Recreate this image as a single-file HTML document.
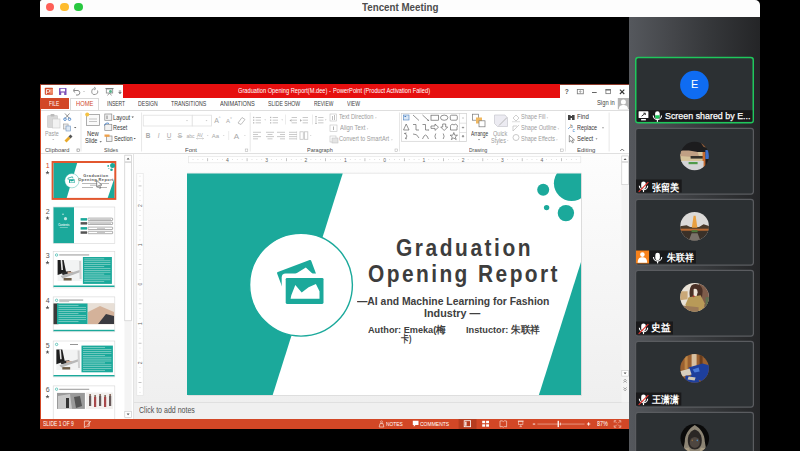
<!DOCTYPE html>
<html><head><meta charset="utf-8">
<style>
*{margin:0;padding:0;box-sizing:border-box}
html,body{width:800px;height:451px;overflow:hidden;background:#000;font-family:"Liberation Sans",sans-serif;position:relative}
.a{position:absolute}
.t{position:absolute;white-space:nowrap;line-height:1;transform-origin:0 0}
svg{position:absolute;overflow:visible}
</style></head><body>
<div class="a" style="left:40px;top:0px;width:720.00px;height:17.00px;background:#fdfdfd;border-radius:2px 5px 0 0"></div>
<div class="a" style="left:45.7px;top:2.8px;width:8.6px;height:8.6px;border-radius:50%;background:#fe5f57"></div>
<div class="a" style="left:60.10000000000001px;top:2.8px;width:8.6px;height:8.6px;border-radius:50%;background:#febc2e"></div>
<div class="a" style="left:74.3px;top:2.8px;width:8.6px;height:8.6px;border-radius:50%;background:#28c840"></div>
<div class="t" style="left:361.70px;top:2.68px;font-size:10.14px;color:#4d4d4d;font-weight:bold;transform:scaleX(0.965);">Tencent Meeting</div>
<div class="a" style="left:629px;top:17px;width:131.00px;height:434.00px;background:linear-gradient(90deg,#55585d 0%,#46484c 30%,#36383b 60%,#242527 100%)"></div>
<div class="a" style="left:40px;top:84px;width:589.00px;height:345.00px;background:#fff"></div>
<div class="a" style="left:40px;top:84px;width:1.00px;height:345.00px;background:#d24726"></div>
<div class="a" style="left:40px;top:84px;width:589.00px;height:0.90px;background:#8c3a2a"></div>
<div class="a" style="left:123px;top:84px;width:437.00px;height:14.00px;background:#e60f0f"></div>
<div class="t" style="left:237.72px;top:88.39px;font-size:6.96px;color:#fff;transform:scaleX(0.817);">Graduation Opening Report(M.dee) -</div>
<div class="t" style="left:332.54px;top:88.39px;font-size:6.96px;color:#fff;transform:scaleX(0.818);">PowerPoint (Product Activation Failed)</div>
<div class="a" style="left:40px;top:98.4px;width:28.50px;height:11.10px;background:#d24726"></div>
<div class="t" style="left:49.01px;top:100.76px;font-size:6.52px;color:#fff;transform:scaleX(0.753);">FILE</div>
<div class="a" style="left:70.4px;top:98.2px;width:29.10px;height:12.40px;background:#fff;border:1px solid #d9d9d9;border-bottom:none"></div>
<div class="t" style="left:76.14px;top:100.76px;font-size:6.52px;color:#d04a2a;transform:scaleX(0.888);">HOME</div>
<div class="t" style="left:106.55px;top:100.76px;font-size:6.52px;color:#3c3c3c;transform:scaleX(0.763);">INSERT</div>
<div class="t" style="left:138.49px;top:100.76px;font-size:6.52px;color:#3c3c3c;transform:scaleX(0.791);">DESIGN</div>
<div class="t" style="left:171.39px;top:100.76px;font-size:6.52px;color:#3c3c3c;transform:scaleX(0.805);">TRANSITIONS</div>
<div class="t" style="left:220.40px;top:100.76px;font-size:6.52px;color:#3c3c3c;transform:scaleX(0.868);">ANIMATIONS</div>
<div class="t" style="left:268.20px;top:100.76px;font-size:6.52px;color:#3c3c3c;transform:scaleX(0.786);">SLIDE SHOW</div>
<div class="t" style="left:313.61px;top:100.76px;font-size:6.52px;color:#3c3c3c;transform:scaleX(0.753);">REVIEW</div>
<div class="t" style="left:347.00px;top:100.76px;font-size:6.52px;color:#3c3c3c;transform:scaleX(0.778);">VIEW</div>
<div class="t" style="left:597.07px;top:100.03px;font-size:6.67px;color:#444;transform:scaleX(0.871);">Sign in</div>
<div class="a" style="left:41px;top:109.6px;width:588.00px;height:0.80px;background:#dedede"></div>
<div class="a" style="left:41px;top:153px;width:588.00px;height:1.00px;background:#e0e0e0"></div>
<div class="t" style="left:45.32px;top:130.94px;font-size:6.96px;color:#9c9c9c;transform:scaleX(0.774);">Paste</div>
<div class="t" style="left:87.13px;top:130.94px;font-size:6.96px;color:#3a3a3a;transform:scaleX(0.842);">New</div>
<div class="t" style="left:84.88px;top:138.09px;font-size:6.96px;color:#3a3a3a;transform:scaleX(0.797);">Slide</div>
<div class="t" style="left:113.29px;top:115.09px;font-size:6.96px;color:#3a3a3a;transform:scaleX(0.823);">Layout</div>
<div class="t" style="left:113.32px;top:125.09px;font-size:6.96px;color:#3a3a3a;transform:scaleX(0.780);">Reset</div>
<div class="t" style="left:113.68px;top:135.94px;font-size:6.96px;color:#3a3a3a;transform:scaleX(0.803);">Section</div>
<div class="t" style="left:44.81px;top:146.70px;font-size:6.23px;color:#4a4a4a;transform:scaleX(0.915);">Clipboard</div>
<div class="t" style="left:104.29px;top:146.70px;font-size:6.23px;color:#4a4a4a;transform:scaleX(0.831);">Slides</div>
<div class="t" style="left:185.02px;top:146.70px;font-size:6.23px;color:#4a4a4a;transform:scaleX(0.960);">Font</div>
<div class="t" style="left:307.06px;top:146.70px;font-size:6.23px;color:#4a4a4a;transform:scaleX(0.885);">Paragraph</div>
<div class="t" style="left:469.10px;top:146.70px;font-size:6.23px;color:#4a4a4a;transform:scaleX(0.795);">Drawing</div>
<div class="t" style="left:577.02px;top:146.70px;font-size:6.23px;color:#4a4a4a;transform:scaleX(0.961);">Editing</div>
<div class="t" style="left:339.49px;top:114.49px;font-size:6.96px;color:#9c9c9c;transform:scaleX(0.815);">Text Direction</div>
<div class="t" style="left:339.60px;top:125.49px;font-size:6.96px;color:#9c9c9c;transform:scaleX(0.842);">Align Text</div>
<div class="t" style="left:339.32px;top:136.49px;font-size:6.96px;color:#9c9c9c;transform:scaleX(0.816);">Convert to SmartArt</div>
<div class="t" style="left:470.50px;top:130.94px;font-size:6.96px;color:#3a3a3a;transform:scaleX(0.694);">Arrange</div>
<div class="t" style="left:493.28px;top:130.94px;font-size:6.96px;color:#9c9c9c;transform:scaleX(0.797);">Quick</div>
<div class="t" style="left:491.28px;top:138.09px;font-size:6.96px;color:#9c9c9c;transform:scaleX(0.786);">Styles</div>
<div class="t" style="left:520.78px;top:114.49px;font-size:6.96px;color:#9c9c9c;transform:scaleX(0.794);">Shape Fill</div>
<div class="t" style="left:520.78px;top:125.49px;font-size:6.96px;color:#9c9c9c;transform:scaleX(0.803);">Shape Outline</div>
<div class="t" style="left:520.78px;top:136.49px;font-size:6.96px;color:#9c9c9c;transform:scaleX(0.785);">Shape Effects</div>
<div class="t" style="left:576.51px;top:114.49px;font-size:6.96px;color:#3a3a3a;transform:scaleX(0.874);">Find</div>
<div class="t" style="left:576.56px;top:125.49px;font-size:6.96px;color:#3a3a3a;transform:scaleX(0.785);">Replace</div>
<div class="t" style="left:576.77px;top:136.49px;font-size:6.96px;color:#3a3a3a;transform:scaleX(0.839);">Select</div>
<svg style="left:0;top:0" width="800" height="451" viewBox="0 0 800 451">
<rect x="44.8" y="87.8" width="8.2" height="7" rx="0.8" fill="#d24726"/><rect x="49.5" y="88.8" width="3.5" height="5" fill="#f08b6a"/><path d="M46.4,94 V89.6 H48.6 A1.3,1.3 0 0 1 48.6,92.2 H46.4" stroke="#fff" stroke-width="0.9" fill="none"/>
<rect x="59" y="88" width="7.5" height="7" rx="0.6" fill="#7d52b8"/><rect x="60.5" y="88.8" width="4.5" height="2.6" fill="#fff"/><rect x="61.2" y="92.6" width="3" height="2.4" fill="#fff"/>
<path d="M74,90.5 H78 A2.3,2.3 0 0 1 78,95 H76" stroke="#8a8a8a" stroke-width="1" fill="none"/><path d="M73,90.5 L75.2,88.4 M73,90.5 L75.2,92.6" stroke="#8a8a8a" stroke-width="1"/>
<circle cx="84" cy="91.5" r="0.5" fill="#999"/>
<path d="M97.5,90.5 A3,3 0 1 1 94.5,88.5" stroke="#999" stroke-width="1" fill="none"/><path d="M94,87 L96,88.6 L94,90" stroke="#999" stroke-width="0.9" fill="none"/>
<rect x="105.5" y="88" width="8" height="1" fill="#777"/><rect x="106.3" y="89" width="6.4" height="4" fill="none" stroke="#888" stroke-width="0.8"/><path d="M109.5,93 L107.5,95.5 M109.5,93 L111.5,95.5" stroke="#888" stroke-width="0.8"/><circle cx="110.5" cy="91.5" r="1.4" fill="#54b38a"/>
<path d="M118.8,91 H121.2 M118.8,92.4 L120,93.8 L121.2,92.4Z" stroke="#666" stroke-width="0.7" fill="#666"/>
<text x="566.7" y="94" font-family="Liberation Sans" font-weight="bold" font-size="6.6" fill="#555" text-anchor="middle">?</text>
<rect x="577.3" y="89.5" width="6" height="4.3" fill="none" stroke="#777" stroke-width="0.8"/><path d="M580.3,93.4 V90.8 M579.2,91.8 L580.3,90.6 L581.4,91.8" stroke="#777" stroke-width="0.6" fill="none"/>
<rect x="592" y="92" width="4.7" height="0.9" fill="#555"/>
<rect x="605.9" y="89.6" width="4.6" height="4.1" fill="none" stroke="#666" stroke-width="0.7"/><rect x="605.6" y="89.3" width="5.2" height="1.2" fill="#666"/>
<path d="M619.9,89.6 L624.3,94 M624.3,89.6 L619.9,94" stroke="#333" stroke-width="1.1"/>
<rect x="617.8" y="98" width="11.2" height="11.3" fill="#b4b4b4"/><circle cx="623.4" cy="101.9" r="2.5" fill="#fff"/><path d="M618.8,109.3 C619,105.6 621.2,105 623.4,105 C625.6,105 627.8,105.6 628,109.3Z" fill="#fff"/>
<rect x="47.5" y="115.5" width="10" height="12" rx="0.6" fill="#d8d8d8" stroke="#c4c4c4" stroke-width="0.6"/><rect x="50.5" y="114" width="4" height="2.6" rx="0.8" fill="#bbb"/><rect x="52.5" y="119" width="7.5" height="9" fill="#f2f2f2" stroke="#c8c8c8" stroke-width="0.6"/>
<path d="M52.5,139.5 h1.6" stroke="#aaa" stroke-width="0.7"/>
<path d="M65,113.5 L69.5,118.5 M69.5,113.5 L65,118.5" stroke="#777" stroke-width="0.8"/><circle cx="65" cy="119.2" r="1.3" fill="none" stroke="#3b78c2" stroke-width="0.8"/><circle cx="69.5" cy="119.2" r="1.3" fill="none" stroke="#3b78c2" stroke-width="0.8"/>
<rect x="63.5" y="124" width="4.6" height="5" fill="#e9e9e9" stroke="#9a9a9a" stroke-width="0.6"/><rect x="66" y="126" width="4.6" height="5" fill="#dde8f4" stroke="#6f93c0" stroke-width="0.6"/><path d="M74,127 h2.4 l-1.2,1.3z" fill="#555"/>
<path d="M64.5,140.5 L68.5,136.5 L70.5,138.5 L66.5,142.5Z" fill="#e8a92a"/><path d="M68.5,136.5 L70.5,134.5 L72.5,136.5 L70.5,138.5Z" fill="#555"/>
<rect x="77" y="149" width="2.6" height="2.6" fill="none" stroke="#999" stroke-width="0.5"/>
<rect x="86.5" y="114.5" width="13" height="11" fill="#fafafa" stroke="#9a9a9a" stroke-width="0.8"/><rect x="89" y="118.5" width="8" height="1" fill="#c4c4c4"/><rect x="89" y="121" width="8" height="1" fill="#c4c4c4"/><circle cx="87.2" cy="114.5" r="2" fill="#f5c242"/>
<path d="M99.5,141.2 h2.4 l-1.2,1.3z" fill="#555"/>
<rect x="104.8" y="114" width="7" height="6.3" fill="#f2f2f2" stroke="#8a8a8a" stroke-width="0.7"/><rect x="106" y="115.5" width="2" height="3.5" fill="#bbb"/>
<path d="M131.5,116.6 h2.4 l-1.2,1.3z" fill="#555"/>
<rect x="104.8" y="124.3" width="7" height="6.3" fill="#f2f2f2" stroke="#8a8a8a" stroke-width="0.7"/><path d="M104.5,125.5 A3,3 0 0 1 109,123.5" stroke="#3b78c2" stroke-width="0.9" fill="none"/>
<rect x="106.5" y="136" width="5.5" height="5.5" fill="#f2f2f2" stroke="#8a8a8a" stroke-width="0.7"/><rect x="104.5" y="134.5" width="5" height="2.3" fill="#f0a048"/>
<path d="M133.5,138.0 h2.4 l-1.2,1.3z" fill="#555"/>
<rect x="80.6" y="112.5" width="0.8" height="39" fill="#e2e2e2"/>
<rect x="141.25" y="112.5" width="0.8" height="39" fill="#e2e2e2"/>
<rect x="249.75" y="112.5" width="0.8" height="39" fill="#e2e2e2"/>
<rect x="399" y="112.5" width="0.8" height="39" fill="#e2e2e2"/>
<rect x="565" y="112.5" width="0.8" height="39" fill="#e2e2e2"/>
<rect x="608.7" y="112.5" width="0.8" height="39" fill="#e2e2e2"/>
<rect x="77" y="149" width="2.6" height="2.6" fill="none" stroke="#aaa" stroke-width="0.5"/>
<rect x="245.2" y="149" width="2.6" height="2.6" fill="none" stroke="#aaa" stroke-width="0.5"/>
<rect x="395" y="149" width="2.6" height="2.6" fill="none" stroke="#aaa" stroke-width="0.5"/>
<rect x="560.6" y="149" width="2.6" height="2.6" fill="none" stroke="#aaa" stroke-width="0.5"/>
<rect x="143.25" y="115.2" width="49" height="10.8" fill="#fff" stroke="#e0e0e0" stroke-width="0.8"/><rect x="192.25" y="115.2" width="19.2" height="10.8" fill="#fff" stroke="#e0e0e0" stroke-width="0.8"/>
<path d="M186,120.3 h2 l-1,1z M205.5,120.3 h2 l-1,1z" fill="#bbb"/>
<text x="216.5" y="123.4" font-family="Liberation Sans" font-size="7" fill="#a8a8a8" font-weight="normal" text-anchor="middle" >A</text>
<text x="219.6" y="118.6" font-family="Liberation Sans" font-size="3.5" fill="#a8a8a8" font-weight="normal" text-anchor="middle" >^</text>
<text x="228" y="123.4" font-family="Liberation Sans" font-size="6" fill="#a8a8a8" font-weight="normal" text-anchor="middle" >A</text>
<text x="231" y="118.6" font-family="Liberation Sans" font-size="3" fill="#a8a8a8" font-weight="normal" text-anchor="middle" >v</text>
<path d="M238,123 L242,117.5 L245,119.5 L241,124.5Z" fill="none" stroke="#b0b0b0" stroke-width="0.8"/>
<text x="148" y="138" font-family="Liberation Sans" font-size="6.4" fill="#a8a8a8" font-weight="bold" text-anchor="middle" >B</text>
<text x="158.6" y="138" font-family="Liberation Sans" font-size="6.4" fill="#a8a8a8" font-weight="normal" text-anchor="middle" font-style="italic">I</text>
<text x="169" y="138" font-family="Liberation Sans" font-size="6.4" fill="#a8a8a8" font-weight="normal" text-anchor="middle" >U</text>
<rect x="166.8" y="139" width="4.4" height="0.6" fill="#b0b0b0"/>
<text x="180" y="138" font-family="Liberation Sans" font-size="6.4" fill="#a8a8a8" font-weight="normal" text-anchor="middle" >S</text>
<rect x="177.5" y="136" width="5" height="0.6" fill="#b0b0b0"/>
<text x="190.5" y="138" font-family="Liberation Sans" font-size="5" fill="#a8a8a8" font-weight="normal" text-anchor="middle" >abc</text>
<text x="200" y="136.5" font-family="Liberation Sans" font-size="4.6" fill="#a8a8a8" font-weight="normal" text-anchor="middle" >AV</text>
<path d="M196.5,138.5 h7 M197.5,137.7 l-1,0.8 l1,0.8 M202.5,137.7 l1,0.8 l-1,0.8" stroke="#b0b0b0" stroke-width="0.5" fill="none"/>
<text x="215.5" y="138" font-family="Liberation Sans" font-size="6" fill="#a8a8a8" font-weight="normal" text-anchor="middle" >Aa</text>
<text x="236.5" y="138.5" font-family="Liberation Sans" font-size="8" fill="#a8a8a8" font-weight="normal" text-anchor="middle" >A</text>
<path d="M206.8,135.2 h1.8 l-0.9,0.9z" fill="#bbb"/>
<path d="M222.8,135.2 h1.8 l-0.9,0.9z" fill="#bbb"/>
<path d="M244,135.2 h1.8 l-0.9,0.9z" fill="#bbb"/>
<rect x="228.5" y="131" width="0.6" height="9" fill="#e0e0e0"/>
<rect x="253" y="116.8" width="1.3" height="1.3" fill="#b8b8b8"/><rect x="255.6" y="117.0" width="5.4" height="0.9" fill="#c4c4c4"/><rect x="253" y="119.5" width="1.3" height="1.3" fill="#b8b8b8"/><rect x="255.6" y="119.7" width="5.4" height="0.9" fill="#c4c4c4"/><rect x="253" y="122.2" width="1.3" height="1.3" fill="#b8b8b8"/><rect x="255.6" y="122.4" width="5.4" height="0.9" fill="#c4c4c4"/>
<rect x="270" y="116.8" width="1.3" height="1.3" fill="#b8b8b8"/><rect x="272.6" y="117.0" width="5.4" height="0.9" fill="#c4c4c4"/><rect x="270" y="119.5" width="1.3" height="1.3" fill="#b8b8b8"/><rect x="272.6" y="119.7" width="5.4" height="0.9" fill="#c4c4c4"/><rect x="270" y="122.2" width="1.3" height="1.3" fill="#b8b8b8"/><rect x="272.6" y="122.4" width="5.4" height="0.9" fill="#c4c4c4"/>
<path d="M264.3,119.6 h1.8 l-0.9,0.9z M281.3,119.6 h1.8 l-0.9,0.9z M324.8,119.6 h1.8 l-0.9,0.9z M309.8,135.2 h1.8 l-0.9,0.9z" fill="#bbb"/>
<rect x="285" y="114.5" width="0.6" height="10" fill="#e0e0e0"/><rect x="312" y="114.5" width="0.6" height="10" fill="#e0e0e0"/><rect x="296.5" y="131" width="0.6" height="9" fill="#e0e0e0"/>
<rect x="291.6" y="117.0" width="5.4" height="0.9" fill="#c4c4c4"/><rect x="291.6" y="119.7" width="5.4" height="0.9" fill="#c4c4c4"/><rect x="291.6" y="122.4" width="5.4" height="0.9" fill="#c4c4c4"/>
<rect x="302.6" y="117.0" width="5.4" height="0.9" fill="#c4c4c4"/><rect x="302.6" y="119.7" width="5.4" height="0.9" fill="#c4c4c4"/><rect x="302.6" y="122.4" width="5.4" height="0.9" fill="#c4c4c4"/>
<path d="M289.5,120.4 l2,-1.4 v2.8z M300,119 l2,1.4 l-2,1.4z" fill="#b0b0b0"/>
<rect x="318.1" y="117.0" width="5.4" height="0.9" fill="#c4c4c4"/><rect x="318.1" y="119.7" width="5.4" height="0.9" fill="#c4c4c4"/><rect x="318.1" y="122.4" width="5.4" height="0.9" fill="#c4c4c4"/>
<path d="M316,116 v8 M315,117 l1,-1 l1,1 M315,123 l1,1 l1,-1" stroke="#b0b0b0" stroke-width="0.6" fill="none"/>
<rect x="253" y="131.8" width="8" height="0.9" fill="#c4c4c4"/>
<rect x="253" y="134.0" width="5" height="0.9" fill="#c4c4c4"/>
<rect x="253" y="136.20000000000002" width="8" height="0.9" fill="#c4c4c4"/>
<rect x="253" y="138.4" width="5" height="0.9" fill="#c4c4c4"/>
<rect x="266" y="131.8" width="8" height="0.9" fill="#c4c4c4"/>
<rect x="267.5" y="134.0" width="5" height="0.9" fill="#c4c4c4"/>
<rect x="266" y="136.20000000000002" width="8" height="0.9" fill="#c4c4c4"/>
<rect x="267.5" y="138.4" width="5" height="0.9" fill="#c4c4c4"/>
<rect x="277" y="131.8" width="8" height="0.9" fill="#c4c4c4"/>
<rect x="280" y="134.0" width="5" height="0.9" fill="#c4c4c4"/>
<rect x="277" y="136.20000000000002" width="8" height="0.9" fill="#c4c4c4"/>
<rect x="280" y="138.4" width="5" height="0.9" fill="#c4c4c4"/>
<rect x="289" y="131.8" width="8" height="0.9" fill="#c4c4c4"/>
<rect x="289" y="134.0" width="8" height="0.9" fill="#c4c4c4"/>
<rect x="289" y="136.20000000000002" width="8" height="0.9" fill="#c4c4c4"/>
<rect x="289" y="138.4" width="8" height="0.9" fill="#c4c4c4"/>
<rect x="300" y="131.8" width="3.3" height="7.5" fill="none" stroke="#c4c4c4" stroke-width="0.8"/><rect x="304.5" y="131.8" width="3.3" height="7.5" fill="none" stroke="#c4c4c4" stroke-width="0.8"/>
<rect x="330" y="114" width="6.5" height="7" fill="none" stroke="#c0c0c0" stroke-width="0.6"/><rect x="332" y="116" width="0.8" height="4" fill="#b0b0b0"/><rect x="334" y="115" width="0.8" height="5" fill="#b0b0b0"/>
<rect x="330" y="125" width="7" height="6.5" fill="none" stroke="#c0c0c0" stroke-width="0.6"/><rect x="333" y="126.5" width="1" height="3.5" fill="#b0b0b0"/>
<rect x="330" y="136" width="6" height="6" fill="none" stroke="#c0c0c0" stroke-width="0.6"/><rect x="332" y="138" width="6" height="5" fill="#e4e4e4" stroke="#bbb" stroke-width="0.5"/>
<path d="M375,117.6 h1.8 l-0.9,0.9z M366.6,128.6 h1.8 l-0.9,0.9z M391,139.6 h1.8 l-0.9,0.9z" fill="#bbb"/>
<rect x="401.5" y="113.5" width="65" height="27.8" fill="#fff" stroke="#d0d0d0" stroke-width="0.7"/><rect x="459.5" y="113.5" width="7" height="27.8" fill="#fff" stroke="#d0d0d0" stroke-width="0.6"/>
<rect x="459.5" y="122.8" width="7" height="0.6" fill="#d0d0d0"/><rect x="459.5" y="132.1" width="7" height="0.6" fill="#d0d0d0"/>
<path d="M462.2,118 h1.6 M462,127.3 h2 l-1,1z M462,136.3 h2 l-1,1z M462,135.5 h2" stroke="#777" stroke-width="0.5" fill="#777"/>
<rect x="403.5" y="115" width="5.5" height="5" fill="#dbe8f6" stroke="#4a7fc0" stroke-width="0.6"/><rect x="404.5" y="116" width="1.6" height="1" fill="#4a7fc0"/>
<path d="M413,115 L419,120.5" stroke="#666" stroke-width="0.7" fill="none"/>
<path d="M422.5,115 L428.5,120.5" stroke="#666" stroke-width="0.7" fill="none"/><path d="M428,119.3 l1.2,1.8 l-1.8,-0.3z" fill="#666"/>
<rect x="431" y="115.2" width="7.5" height="5" stroke="#666" stroke-width="0.7" fill="none"/>
<ellipse cx="444.2" cy="117.7" rx="3.7" ry="2.6" stroke="#666" stroke-width="0.7" fill="none"/>
<rect x="450.3" y="115.2" width="7" height="5" rx="1.2" stroke="#666" stroke-width="0.7" fill="none"/>
<path d="M406.2,124 L403.5,130 H409Z" stroke="#666" stroke-width="0.7" fill="none"/>
<path d="M413,124.5 H416 V130 H419" stroke="#666" stroke-width="0.7" fill="none"/>
<path d="M422.5,124.5 H425.5 V130 H428" stroke="#666" stroke-width="0.7" fill="none"/><path d="M428,129.2 l1.3,0.8 l-1.3,0.8z" fill="#666"/>
<path d="M431,126 H435 V124 L438.5,127.2 L435,130.4 V128.4 H431Z" stroke="#666" stroke-width="0.7" fill="none"/>
<path d="M442.7,124 H445.7 V127 H447.7 L444.2,130.5 L440.7,127 H442.7Z" stroke="#666" stroke-width="0.7" fill="none"/>
<path d="M450.5,130 V126.5 A2,2 0 0 1 454,125 A1.8,1.8 0 0 1 457,127.5 V130Z" stroke="#666" stroke-width="0.7" fill="none"/>
<path d="M404,133.5 l2.5,-0.5 M405,133 L407,136 L405.5,138.5 M406.2,137.5 l-0.6,1.2 l1.3,0.1" stroke="#666" stroke-width="0.7" fill="none"/>
<path d="M413,134 Q417,133.5 419,138" stroke="#666" stroke-width="0.7" fill="none"/>
<path d="M422.5,139 Q425.5,131 428.5,139" stroke="#666" stroke-width="0.7" fill="none"/>
<path d="M435.8,133.5 Q434,136.2 435.8,139" stroke="#666" stroke-width="0.7" fill="none"/>
<path d="M443.2,133.5 Q445,136.2 443.2,139" stroke="#666" stroke-width="0.7" fill="none"/>
<path d="M453.8,132.5 L454.8,135.2 L457.5,135.2 L455.3,136.9 L456.2,139.6 L453.8,138 L451.4,139.6 L452.3,136.9 L450.1,135.2 L452.8,135.2Z" stroke="#666" stroke-width="0.7" fill="none"/>
<rect x="472.5" y="114.2" width="6" height="6" fill="#fff" stroke="#777" stroke-width="0.7"/><rect x="476" y="117.5" width="6" height="6" fill="#f0b860"/><rect x="479" y="120.8" width="6" height="6" fill="#fff" stroke="#777" stroke-width="0.7"/>
<path d="M478,139.3 h2 l-1,1z" fill="#555"/>
<path d="M494.5,115 H505 L507.5,118 V126.5 H497.5 L494.5,123.5Z" fill="#ecebf2" stroke="#c7c7cf" stroke-width="0.7"/><path d="M499,125.5 L507,117.5" stroke="#b8b8b8" stroke-width="1"/>
<path d="M506.8,140.2 h1.8 l-0.9,0.9z" fill="#bbb"/>
<path d="M513,118 L516,115 L519,118 L516,121Z" fill="none" stroke="#bbb" stroke-width="0.7"/><rect x="512" y="121" width="8" height="1.3" fill="#e5e5e5"/>
<path d="M513,131 L519,125 M513,131 V126 H517" fill="none" stroke="#bbb" stroke-width="0.7"/>
<circle cx="516" cy="137.5" r="3" fill="none" stroke="#bbb" stroke-width="0.8"/>
<path d="M546.5,117.6 h1.8 l-0.9,0.9z M557.5,128.6 h1.8 l-0.9,0.9z M556,139.6 h1.8 l-0.9,0.9z" fill="#bbb"/>
<rect x="568" y="115" width="2.6" height="5" fill="#444"/><rect x="572" y="115" width="2.6" height="5" fill="#444"/><rect x="569.5" y="116" width="4" height="2" fill="#444"/>
<text x="571.5" y="128" font-family="Liberation Sans" font-size="4.5" fill="#555" text-anchor="middle">b</text><text x="573.5" y="131.5" font-family="Liberation Sans" font-size="4.5" fill="#3b78c2" text-anchor="middle">c</text><path d="M568,129 l2,-2" stroke="#3b78c2" stroke-width="0.6"/>
<path d="M602,127.4 h2 l-1,1z M595.5,138.6 h2 l-1,1z" fill="#555"/>
<path d="M569.3,135.5 V142 L571,140.5 L572.5,143 L573.5,142.4 L572.2,140 L574.5,140Z" fill="#fff" stroke="#555" stroke-width="0.6"/>
<path d="M620.2,151 L622.2,149 L624.2,151" stroke="#555" stroke-width="0.8" fill="none"/>
</svg>
<div class="a" style="left:41px;top:154px;width:93.00px;height:265.00px;background:#fff"></div>
<div class="a" style="left:134px;top:154px;width:495.00px;height:249.00px;background:linear-gradient(180deg,#fdfdfd 0%,#f6f6f6 50%,#efefef 100%)"></div>
<div class="a" style="left:134px;top:402.4px;width:495.00px;height:16.60px;background:#f0f0f0;border-top:1px solid #e0e0e0"></div>
<svg style="left:0;top:0" width="800" height="451" viewBox="0 0 800 451">
<rect x="124.5" y="154.5" width="7.2" height="264" fill="#f4f4f4"/>
<rect x="124.8" y="155.2" width="6.6" height="6.6" fill="#fff" stroke="#c6c6c6" stroke-width="0.6"/><path d="M126.6,159.6 L128.1,157.8 L129.6,159.6Z" fill="#555"/>
<rect x="124.8" y="162.3" width="6.6" height="158.5" fill="#fff" stroke="#c6c6c6" stroke-width="0.6"/>
<rect x="124.8" y="411.3" width="6.6" height="6.2" fill="#fff" stroke="#c6c6c6" stroke-width="0.6"/><path d="M126.6,413.5 L128.1,415.3 L129.6,413.5Z" fill="#555"/>
<rect x="133.2" y="154" width="0.8" height="265" fill="#dcdcdc"/>
<rect x="621.5" y="154.5" width="7.5" height="248" fill="#f4f4f4"/>
<rect x="621.8" y="156" width="6.6" height="5.8" fill="#fff" stroke="#c6c6c6" stroke-width="0.6"/><path d="M623.6,160 L625.1,158.2 L626.6,160Z" fill="#555"/>
<rect x="621.8" y="162.2" width="6.6" height="22.5" fill="#fff" stroke="#c6c6c6" stroke-width="0.6"/>
<rect x="621.8" y="370.5" width="6.6" height="5.6" fill="#fff" stroke="#c6c6c6" stroke-width="0.6"/><path d="M623.6,372.4 L625.1,374.2 L626.6,372.4Z" fill="#555"/>
<path d="M623.6,380.8 L625.1,379.2 L626.6,380.8 M623.6,382.6 L625.1,381 L626.6,382.6" stroke="#666" stroke-width="0.6" fill="none"/>
<path d="M623.6,387.4 L625.1,389 L626.6,387.4 M623.6,389.2 L625.1,390.8 L626.6,389.2" stroke="#666" stroke-width="0.6" fill="none"/>
<rect x="188.3" y="156.6" width="392.5" height="6.2" fill="#fff" stroke="#e2e2e2" stroke-width="0.6"/>
<rect x="192.71" y="159.4" width="0.6" height="0.6" fill="#a8a8a8"/>
<rect x="197.63" y="159.4" width="0.6" height="0.6" fill="#a8a8a8"/>
<rect x="202.54" y="159.4" width="0.6" height="0.6" fill="#a8a8a8"/>
<rect x="207.45" y="158.2" width="0.6" height="3" fill="#9a9a9a"/>
<rect x="212.36" y="159.4" width="0.6" height="0.6" fill="#a8a8a8"/>
<rect x="217.28" y="159.4" width="0.6" height="0.6" fill="#a8a8a8"/>
<rect x="222.19" y="159.4" width="0.6" height="0.6" fill="#a8a8a8"/>
<rect x="232.01" y="159.4" width="0.6" height="0.6" fill="#a8a8a8"/>
<rect x="236.93" y="159.4" width="0.6" height="0.6" fill="#a8a8a8"/>
<rect x="241.84" y="159.4" width="0.6" height="0.6" fill="#a8a8a8"/>
<rect x="246.75" y="158.2" width="0.6" height="3" fill="#9a9a9a"/>
<rect x="251.66" y="159.4" width="0.6" height="0.6" fill="#a8a8a8"/>
<rect x="256.57" y="159.4" width="0.6" height="0.6" fill="#a8a8a8"/>
<rect x="261.49" y="159.4" width="0.6" height="0.6" fill="#a8a8a8"/>
<rect x="271.31" y="159.4" width="0.6" height="0.6" fill="#a8a8a8"/>
<rect x="276.23" y="159.4" width="0.6" height="0.6" fill="#a8a8a8"/>
<rect x="281.14" y="159.4" width="0.6" height="0.6" fill="#a8a8a8"/>
<rect x="286.05" y="158.2" width="0.6" height="3" fill="#9a9a9a"/>
<rect x="290.96" y="159.4" width="0.6" height="0.6" fill="#a8a8a8"/>
<rect x="295.88" y="159.4" width="0.6" height="0.6" fill="#a8a8a8"/>
<rect x="300.79" y="159.4" width="0.6" height="0.6" fill="#a8a8a8"/>
<rect x="310.61" y="159.4" width="0.6" height="0.6" fill="#a8a8a8"/>
<rect x="315.53" y="159.4" width="0.6" height="0.6" fill="#a8a8a8"/>
<rect x="320.44" y="159.4" width="0.6" height="0.6" fill="#a8a8a8"/>
<rect x="325.35" y="158.2" width="0.6" height="3" fill="#9a9a9a"/>
<rect x="330.26" y="159.4" width="0.6" height="0.6" fill="#a8a8a8"/>
<rect x="335.18" y="159.4" width="0.6" height="0.6" fill="#a8a8a8"/>
<rect x="340.09" y="159.4" width="0.6" height="0.6" fill="#a8a8a8"/>
<rect x="349.91" y="159.4" width="0.6" height="0.6" fill="#a8a8a8"/>
<rect x="354.82" y="159.4" width="0.6" height="0.6" fill="#a8a8a8"/>
<rect x="359.74" y="159.4" width="0.6" height="0.6" fill="#a8a8a8"/>
<rect x="364.65" y="158.2" width="0.6" height="3" fill="#9a9a9a"/>
<rect x="369.56" y="159.4" width="0.6" height="0.6" fill="#a8a8a8"/>
<rect x="374.48" y="159.4" width="0.6" height="0.6" fill="#a8a8a8"/>
<rect x="379.39" y="159.4" width="0.6" height="0.6" fill="#a8a8a8"/>
<rect x="389.21" y="159.4" width="0.6" height="0.6" fill="#a8a8a8"/>
<rect x="394.12" y="159.4" width="0.6" height="0.6" fill="#a8a8a8"/>
<rect x="399.04" y="159.4" width="0.6" height="0.6" fill="#a8a8a8"/>
<rect x="403.95" y="158.2" width="0.6" height="3" fill="#9a9a9a"/>
<rect x="408.86" y="159.4" width="0.6" height="0.6" fill="#a8a8a8"/>
<rect x="413.78" y="159.4" width="0.6" height="0.6" fill="#a8a8a8"/>
<rect x="418.69" y="159.4" width="0.6" height="0.6" fill="#a8a8a8"/>
<rect x="428.51" y="159.4" width="0.6" height="0.6" fill="#a8a8a8"/>
<rect x="433.43" y="159.4" width="0.6" height="0.6" fill="#a8a8a8"/>
<rect x="438.34" y="159.4" width="0.6" height="0.6" fill="#a8a8a8"/>
<rect x="443.25" y="158.2" width="0.6" height="3" fill="#9a9a9a"/>
<rect x="448.16" y="159.4" width="0.6" height="0.6" fill="#a8a8a8"/>
<rect x="453.07" y="159.4" width="0.6" height="0.6" fill="#a8a8a8"/>
<rect x="457.99" y="159.4" width="0.6" height="0.6" fill="#a8a8a8"/>
<rect x="467.81" y="159.4" width="0.6" height="0.6" fill="#a8a8a8"/>
<rect x="472.73" y="159.4" width="0.6" height="0.6" fill="#a8a8a8"/>
<rect x="477.64" y="159.4" width="0.6" height="0.6" fill="#a8a8a8"/>
<rect x="482.55" y="158.2" width="0.6" height="3" fill="#9a9a9a"/>
<rect x="487.46" y="159.4" width="0.6" height="0.6" fill="#a8a8a8"/>
<rect x="492.38" y="159.4" width="0.6" height="0.6" fill="#a8a8a8"/>
<rect x="497.29" y="159.4" width="0.6" height="0.6" fill="#a8a8a8"/>
<rect x="507.11" y="159.4" width="0.6" height="0.6" fill="#a8a8a8"/>
<rect x="512.03" y="159.4" width="0.6" height="0.6" fill="#a8a8a8"/>
<rect x="516.94" y="159.4" width="0.6" height="0.6" fill="#a8a8a8"/>
<rect x="521.85" y="158.2" width="0.6" height="3" fill="#9a9a9a"/>
<rect x="526.76" y="159.4" width="0.6" height="0.6" fill="#a8a8a8"/>
<rect x="531.68" y="159.4" width="0.6" height="0.6" fill="#a8a8a8"/>
<rect x="536.59" y="159.4" width="0.6" height="0.6" fill="#a8a8a8"/>
<rect x="546.41" y="159.4" width="0.6" height="0.6" fill="#a8a8a8"/>
<rect x="551.33" y="159.4" width="0.6" height="0.6" fill="#a8a8a8"/>
<rect x="556.24" y="159.4" width="0.6" height="0.6" fill="#a8a8a8"/>
<rect x="561.15" y="158.2" width="0.6" height="3" fill="#9a9a9a"/>
<rect x="566.06" y="159.4" width="0.6" height="0.6" fill="#a8a8a8"/>
<rect x="570.98" y="159.4" width="0.6" height="0.6" fill="#a8a8a8"/>
<rect x="575.89" y="159.4" width="0.6" height="0.6" fill="#a8a8a8"/>
<text x="227.40" y="162" font-family="Liberation Sans" font-size="5" fill="#666" text-anchor="middle">4</text>
<text x="266.70" y="162" font-family="Liberation Sans" font-size="5" fill="#666" text-anchor="middle">3</text>
<text x="306.00" y="162" font-family="Liberation Sans" font-size="5" fill="#666" text-anchor="middle">2</text>
<text x="345.30" y="162" font-family="Liberation Sans" font-size="5" fill="#666" text-anchor="middle">1</text>
<text x="384.60" y="162" font-family="Liberation Sans" font-size="5" fill="#666" text-anchor="middle">0</text>
<text x="423.90" y="162" font-family="Liberation Sans" font-size="5" fill="#666" text-anchor="middle">1</text>
<text x="463.20" y="162" font-family="Liberation Sans" font-size="5" fill="#666" text-anchor="middle">2</text>
<text x="502.50" y="162" font-family="Liberation Sans" font-size="5" fill="#666" text-anchor="middle">3</text>
<text x="541.80" y="162" font-family="Liberation Sans" font-size="5" fill="#666" text-anchor="middle">4</text>
<rect x="136.8" y="173.3" width="6.4" height="222" fill="#fff" stroke="#e2e2e2" stroke-width="0.6"/>
<rect x="139.7" y="175.82" width="0.6" height="0.6" fill="#a8a8a8"/>
<rect x="139.7" y="180.74" width="0.6" height="0.6" fill="#a8a8a8"/>
<rect x="138.5" y="185.65" width="3" height="0.6" fill="#9a9a9a"/>
<rect x="139.7" y="190.56" width="0.6" height="0.6" fill="#a8a8a8"/>
<rect x="139.7" y="195.47" width="0.6" height="0.6" fill="#a8a8a8"/>
<rect x="139.7" y="200.39" width="0.6" height="0.6" fill="#a8a8a8"/>
<rect x="139.7" y="210.21" width="0.6" height="0.6" fill="#a8a8a8"/>
<rect x="139.7" y="215.12" width="0.6" height="0.6" fill="#a8a8a8"/>
<rect x="139.7" y="220.04" width="0.6" height="0.6" fill="#a8a8a8"/>
<rect x="138.5" y="224.95" width="3" height="0.6" fill="#9a9a9a"/>
<rect x="139.7" y="229.86" width="0.6" height="0.6" fill="#a8a8a8"/>
<rect x="139.7" y="234.77" width="0.6" height="0.6" fill="#a8a8a8"/>
<rect x="139.7" y="239.69" width="0.6" height="0.6" fill="#a8a8a8"/>
<rect x="139.7" y="249.51" width="0.6" height="0.6" fill="#a8a8a8"/>
<rect x="139.7" y="254.42" width="0.6" height="0.6" fill="#a8a8a8"/>
<rect x="139.7" y="259.34" width="0.6" height="0.6" fill="#a8a8a8"/>
<rect x="138.5" y="264.25" width="3" height="0.6" fill="#9a9a9a"/>
<rect x="139.7" y="269.16" width="0.6" height="0.6" fill="#a8a8a8"/>
<rect x="139.7" y="274.07" width="0.6" height="0.6" fill="#a8a8a8"/>
<rect x="139.7" y="278.99" width="0.6" height="0.6" fill="#a8a8a8"/>
<rect x="139.7" y="288.81" width="0.6" height="0.6" fill="#a8a8a8"/>
<rect x="139.7" y="293.72" width="0.6" height="0.6" fill="#a8a8a8"/>
<rect x="139.7" y="298.64" width="0.6" height="0.6" fill="#a8a8a8"/>
<rect x="138.5" y="303.55" width="3" height="0.6" fill="#9a9a9a"/>
<rect x="139.7" y="308.46" width="0.6" height="0.6" fill="#a8a8a8"/>
<rect x="139.7" y="313.38" width="0.6" height="0.6" fill="#a8a8a8"/>
<rect x="139.7" y="318.29" width="0.6" height="0.6" fill="#a8a8a8"/>
<rect x="139.7" y="328.11" width="0.6" height="0.6" fill="#a8a8a8"/>
<rect x="139.7" y="333.02" width="0.6" height="0.6" fill="#a8a8a8"/>
<rect x="139.7" y="337.94" width="0.6" height="0.6" fill="#a8a8a8"/>
<rect x="138.5" y="342.85" width="3" height="0.6" fill="#9a9a9a"/>
<rect x="139.7" y="347.76" width="0.6" height="0.6" fill="#a8a8a8"/>
<rect x="139.7" y="352.67" width="0.6" height="0.6" fill="#a8a8a8"/>
<rect x="139.7" y="357.59" width="0.6" height="0.6" fill="#a8a8a8"/>
<rect x="139.7" y="367.41" width="0.6" height="0.6" fill="#a8a8a8"/>
<rect x="139.7" y="372.32" width="0.6" height="0.6" fill="#a8a8a8"/>
<rect x="139.7" y="377.24" width="0.6" height="0.6" fill="#a8a8a8"/>
<rect x="138.5" y="382.15" width="3" height="0.6" fill="#9a9a9a"/>
<rect x="139.7" y="387.06" width="0.6" height="0.6" fill="#a8a8a8"/>
<rect x="139.7" y="391.97" width="0.6" height="0.6" fill="#a8a8a8"/>
<text x="0" y="0" font-family="Liberation Sans" font-size="5" fill="#666" text-anchor="middle" transform="translate(141.6,205.60) rotate(-90)">2</text>
<text x="0" y="0" font-family="Liberation Sans" font-size="5" fill="#666" text-anchor="middle" transform="translate(141.6,244.90) rotate(-90)">1</text>
<text x="0" y="0" font-family="Liberation Sans" font-size="5" fill="#666" text-anchor="middle" transform="translate(141.6,284.20) rotate(-90)">0</text>
<text x="0" y="0" font-family="Liberation Sans" font-size="5" fill="#666" text-anchor="middle" transform="translate(141.6,323.50) rotate(-90)">1</text>
<text x="0" y="0" font-family="Liberation Sans" font-size="5" fill="#666" text-anchor="middle" transform="translate(141.6,362.80) rotate(-90)">2</text>
<rect x="188" y="395" width="394" height="1" fill="#dedede"/>
</svg>
<svg style="left:0;top:0" width="800" height="451" viewBox="0 0 800 451">
<defs><clipPath id="pc"><rect x="41" y="154" width="83" height="265"/></clipPath></defs><g clip-path="url(#pc)">
<rect x="51.6" y="161" width="64.7" height="38.9" fill="#e2572f"/>
<rect x="53.6" y="163" width="60.7" height="34.9" fill="#fff"/>
<polygon points="53.6,163 77.2,163 66.7,197.9 53.6,197.9" fill="#1ba99b"/>
<polygon points="107.7,197.9 114.3,178.5 114.3,197.9" fill="#1ba99b"/>
<circle cx="71.9" cy="180.7" r="7.15" fill="#fff" stroke="#1ba99b" stroke-width="0.4"/>
<rect x="69" y="179.2" width="5.6" height="3.9" rx="0.3" fill="#1ba99b"/><path d="M68.3,179.8 L67.9,178.2 L72.4,176.8 L73,178.4" stroke="#1ba99b" stroke-width="0.8" fill="none"/><path d="M69.7,182.5 L70.5,180.6 L71.6,181.6 L73.9,180.5 V182.5Z" fill="#fff"/>
<g fill="#1ba99b"><circle cx="112.6" cy="165.4" r="2.5"/><circle cx="108.2" cy="165.9" r="0.9"/><circle cx="108.9" cy="168.5" r="0.5"/><circle cx="111.5" cy="169.7" r="1.3"/></g>
<text x="96" y="176.7" font-family="Liberation Sans" font-weight="bold" font-size="3.9" fill="#555" text-anchor="middle" letter-spacing="0.45">Graduation</text>
<text x="96" y="180.5" font-family="Liberation Sans" font-weight="bold" font-size="3.9" fill="#555" text-anchor="middle" letter-spacing="0.45">Opening Report</text>
<rect x="82" y="183" width="27" height="0.7" fill="#9a9a9a"/><rect x="90" y="184.8" width="10" height="0.7" fill="#9a9a9a"/><rect x="82" y="187.2" width="11" height="0.7" fill="#999"/><rect x="97" y="187.2" width="10" height="0.7" fill="#999"/>
<path d="M96.7,180.4 V187 L98.4,185.6 L99.7,188.4 L100.8,187.9 L99.6,185.2 L101.9,185.1Z" fill="#fff" stroke="#333" stroke-width="0.55"/>
<rect x="53.2" y="207" width="61.6" height="36.400000000000006" fill="#fff" stroke="#d6d6d6" stroke-width="0.6"/>
<rect x="53.5" y="207.3" width="20.5" height="35.8" fill="#1ba99b"/>
<circle cx="63" cy="214.3" r="0.8" fill="#bfe6e1"/><circle cx="65.5" cy="218.7" r="1.6" fill="#bfe6e1"/>
<text x="63.8" y="225.9" font-family="Liberation Sans" font-weight="bold" font-size="2.6" fill="#e6f5f3" text-anchor="middle">Contents</text><rect x="59.8" y="227.2" width="8" height="0.6" fill="#a9dcd6"/>
<rect x="80.6" y="218.10000000000002" width="6.4" height="2.5" fill="#1ba99b"/><rect x="88" y="218.10000000000002" width="24.6" height="2.4" rx="0.5" fill="#fff" stroke="#606060" stroke-width="0.5"/><rect x="89.5" y="218.95000000000002" width="21.5" height="0.7" fill="#b0b0b0"/>
<rect x="80.6" y="222.10000000000002" width="6.4" height="2.5" fill="#555"/><rect x="88" y="222.10000000000002" width="24.6" height="2.4" rx="0.5" fill="#fff" stroke="#606060" stroke-width="0.5"/><rect x="89.5" y="222.95000000000002" width="21.5" height="0.7" fill="#b0b0b0"/>
<rect x="80.6" y="227.10000000000002" width="6.4" height="2.5" fill="#1ba99b"/><rect x="88" y="227.10000000000002" width="24.6" height="2.4" rx="0.5" fill="#fff" stroke="#606060" stroke-width="0.5"/><rect x="97" y="227.95000000000002" width="8" height="0.7" fill="#b0b0b0"/>
<rect x="80.6" y="231.3" width="6.4" height="2.5" fill="#555"/><rect x="88" y="231.3" width="24.6" height="2.4" rx="0.5" fill="#fff" stroke="#606060" stroke-width="0.5"/><rect x="97" y="232.15" width="8" height="0.7" fill="#b0b0b0"/>
<rect x="53.2" y="251.6" width="61.6" height="36.29999999999998" fill="#fff" stroke="#d6d6d6" stroke-width="0.6"/>
<circle cx="56.6" cy="255" r="1.2" fill="none" stroke="#1ba99b" stroke-width="0.6"/><rect x="59.2" y="254.5" width="30" height="0.9" fill="#8a8a8a"/>
<g transform="translate(57.6,260) scale(1.000,1.000)"><rect x="0" y="0" width="24.3" height="21" fill="#f2f3f3"/><path d="M0,0 H6 L8.5,12 L0,15Z" fill="#1e1e1e"/><path d="M3,0 H4.6 L5.4,10 L3.8,10Z" fill="#e8e8e8"/><path d="M4,12 L13,11 L14,13.5 L5,15Z" fill="#2a2a2a"/><path d="M10,11.5 L16,12 L15.5,14.5 L10,14Z" fill="#c9a58e"/><path d="M3,16 L22,10 L23,12 L5,18.5Z" fill="#b8b8b8"/><path d="M21.5,1 L23.5,1 L24,19 L22,19Z" fill="#d0d0d0"/><rect x="6" y="18" width="8" height="2.5" fill="#6e5e48"/></g>
<rect x="82.9" y="257" width="29" height="26.9" fill="#1ba99b"/>
<rect x="84.2" y="258.60" width="20.0" height="0.6" fill="#a8ded6"/>
<rect x="84.2" y="260.50" width="26.2" height="0.6" fill="#a8ded6"/>
<rect x="84.2" y="262.40" width="26.2" height="0.6" fill="#a8ded6"/>
<rect x="84.2" y="264.30" width="26.2" height="0.6" fill="#a8ded6"/>
<rect x="84.2" y="266.20" width="20.0" height="0.6" fill="#a8ded6"/>
<rect x="84.2" y="268.10" width="26.2" height="0.6" fill="#a8ded6"/>
<rect x="84.2" y="270.00" width="26.2" height="0.6" fill="#a8ded6"/>
<rect x="84.2" y="271.90" width="26.2" height="0.6" fill="#a8ded6"/>
<rect x="84.2" y="273.80" width="20.0" height="0.6" fill="#a8ded6"/>
<rect x="84.2" y="275.70" width="26.2" height="0.6" fill="#a8ded6"/>
<rect x="84.2" y="277.60" width="26.2" height="0.6" fill="#a8ded6"/>
<rect x="84.2" y="279.50" width="26.2" height="0.6" fill="#a8ded6"/>
<rect x="84.2" y="281.40" width="20.0" height="0.6" fill="#a8ded6"/>
<rect x="53.5" y="285.5" width="61" height="1.5" fill="#1ba99b"/>
<rect x="53.2" y="296.9" width="61.6" height="34.900000000000034" fill="#fff" stroke="#d6d6d6" stroke-width="0.6"/>
<circle cx="56.6" cy="300.3" r="1.2" fill="none" stroke="#1ba99b" stroke-width="0.6"/><rect x="59.2" y="299.6" width="24" height="0.9" fill="#8a8a8a"/><rect x="59.2" y="301.4" width="10" height="0.7" fill="#aaa"/>
<rect x="53.5" y="303.5" width="61" height="20.7" fill="#d9cfc4"/><rect x="53.5" y="303.5" width="5" height="20.7" fill="#3a3a3a"/><rect x="87" y="303.5" width="27" height="20.7" fill="#e8dfd6"/><path d="M88,312 L100,306 L114,312 V324 H88Z" fill="#d4b29a"/><path d="M98,324 L106,314 L114,316 V324Z" fill="#3a3a40"/>
<rect x="57" y="303.5" width="30.5" height="20.5" fill="#1ba99b"/>
<rect x="58.5" y="305.20" width="20.0" height="0.6" fill="#a8ded6"/>
<rect x="58.5" y="307.20" width="27.5" height="0.6" fill="#a8ded6"/>
<rect x="58.5" y="309.20" width="27.5" height="0.6" fill="#a8ded6"/>
<rect x="58.5" y="311.20" width="27.5" height="0.6" fill="#a8ded6"/>
<rect x="58.5" y="313.20" width="20.0" height="0.6" fill="#a8ded6"/>
<rect x="58.5" y="315.20" width="27.5" height="0.6" fill="#a8ded6"/>
<rect x="58.5" y="317.20" width="27.5" height="0.6" fill="#a8ded6"/>
<rect x="58.5" y="319.20" width="27.5" height="0.6" fill="#a8ded6"/>
<rect x="58.5" y="321.20" width="20.0" height="0.6" fill="#a8ded6"/>
<rect x="53.5" y="329.8" width="61" height="1.4" fill="#1ba99b"/>
<rect x="53.2" y="341" width="61.6" height="35.89999999999998" fill="#fff" stroke="#d6d6d6" stroke-width="0.6"/>
<circle cx="56.6" cy="344.4" r="1.2" fill="none" stroke="#1ba99b" stroke-width="0.6"/><rect x="70" y="344" width="8" height="0.9" fill="#8a8a8a"/>
<g transform="translate(56.4,349.6) scale(0.984,0.971)"><rect x="0" y="0" width="24.3" height="21" fill="#f2f3f3"/><path d="M0,0 H6 L8.5,12 L0,15Z" fill="#1e1e1e"/><path d="M3,0 H4.6 L5.4,10 L3.8,10Z" fill="#e8e8e8"/><path d="M4,12 L13,11 L14,13.5 L5,15Z" fill="#2a2a2a"/><path d="M10,11.5 L16,12 L15.5,14.5 L10,14Z" fill="#c9a58e"/><path d="M3,16 L22,10 L23,12 L5,18.5Z" fill="#b8b8b8"/><path d="M21.5,1 L23.5,1 L24,19 L22,19Z" fill="#d0d0d0"/><rect x="6" y="18" width="8" height="2.5" fill="#6e5e48"/></g>
<rect x="81.5" y="345.6" width="31.4" height="26.7" fill="#1ba99b"/>
<rect x="83" y="347.40" width="22.0" height="0.6" fill="#a8ded6"/>
<rect x="83" y="349.30" width="28.4" height="0.6" fill="#a8ded6"/>
<rect x="83" y="351.20" width="28.4" height="0.6" fill="#a8ded6"/>
<rect x="83" y="353.10" width="28.4" height="0.6" fill="#a8ded6"/>
<rect x="83" y="355.00" width="22.0" height="0.6" fill="#a8ded6"/>
<rect x="83" y="356.90" width="28.4" height="0.6" fill="#a8ded6"/>
<rect x="83" y="358.80" width="28.4" height="0.6" fill="#a8ded6"/>
<rect x="83" y="360.70" width="28.4" height="0.6" fill="#a8ded6"/>
<rect x="83" y="362.60" width="22.0" height="0.6" fill="#a8ded6"/>
<rect x="83" y="364.50" width="28.4" height="0.6" fill="#a8ded6"/>
<rect x="83" y="366.40" width="28.4" height="0.6" fill="#a8ded6"/>
<rect x="83" y="368.30" width="28.4" height="0.6" fill="#a8ded6"/>
<rect x="83" y="370.20" width="22.0" height="0.6" fill="#a8ded6"/>
<rect x="53.5" y="375" width="61" height="1.4" fill="#1ba99b"/>
<rect x="53.2" y="385.9" width="61.6" height="44.10000000000002" fill="#fff" stroke="#d6d6d6" stroke-width="0.6"/>
<circle cx="56.6" cy="389.2" r="1.2" fill="none" stroke="#1ba99b" stroke-width="0.6"/><rect x="59.2" y="388.8" width="30" height="0.9" fill="#8a8a8a"/>
<rect x="57" y="392.9" width="27.9" height="16" fill="#9a9a9a"/><path d="M58,396 L70,394 L72,409 H58Z" fill="#c8c8c8"/><rect x="66" y="398" width="3" height="10" fill="#333"/><path d="M74,397 L80,396 L82,406 L76,408Z" fill="#555"/>
<rect x="85.9" y="392.5" width="27" height="16.5" fill="#f2f0ee"/>
<rect x="89" y="396" width="2.2" height="10" fill="#6a5a5a"/><circle cx="90.1" cy="395" r="1" fill="#7a5a4a"/>
<rect x="94" y="397" width="2.2" height="10" fill="#a8484a"/><circle cx="95.1" cy="396" r="1" fill="#7a5a4a"/>
<rect x="99" y="396" width="2.2" height="10" fill="#6a5a5a"/><circle cx="100.1" cy="395" r="1" fill="#7a5a4a"/>
<rect x="104" y="397" width="2.2" height="10" fill="#a8484a"/><circle cx="105.1" cy="396" r="1" fill="#7a5a4a"/>
<rect x="109" y="396" width="2.2" height="10" fill="#6a5a5a"/><circle cx="110.1" cy="395" r="1" fill="#7a5a4a"/>
</g>
<text x="47.6" y="168.3" font-family="Liberation Sans" font-size="7" fill="#d24726" text-anchor="middle">1</text>
<path transform="translate(47.5,172.60000000000002)" d="M0,-2 L0.6,-0.6 L2,-0.6 L0.9,0.3 L1.3,1.8 L0,0.9 L-1.3,1.8 L-0.9,0.3 L-2,-0.6 L-0.6,-0.6Z" fill="#555"/>
<text x="47.6" y="213.8" font-family="Liberation Sans" font-size="7" fill="#555" text-anchor="middle">2</text>
<path transform="translate(47.5,218.10000000000002)" d="M0,-2 L0.6,-0.6 L2,-0.6 L0.9,0.3 L1.3,1.8 L0,0.9 L-1.3,1.8 L-0.9,0.3 L-2,-0.6 L-0.6,-0.6Z" fill="#555"/>
<text x="47.6" y="258.3" font-family="Liberation Sans" font-size="7" fill="#555" text-anchor="middle">3</text>
<path transform="translate(47.5,262.6)" d="M0,-2 L0.6,-0.6 L2,-0.6 L0.9,0.3 L1.3,1.8 L0,0.9 L-1.3,1.8 L-0.9,0.3 L-2,-0.6 L-0.6,-0.6Z" fill="#555"/>
<text x="47.6" y="303.2" font-family="Liberation Sans" font-size="7" fill="#555" text-anchor="middle">4</text>
<path transform="translate(47.5,307.5)" d="M0,-2 L0.6,-0.6 L2,-0.6 L0.9,0.3 L1.3,1.8 L0,0.9 L-1.3,1.8 L-0.9,0.3 L-2,-0.6 L-0.6,-0.6Z" fill="#555"/>
<text x="47.6" y="347.7" font-family="Liberation Sans" font-size="7" fill="#555" text-anchor="middle">5</text>
<path transform="translate(47.5,352.0)" d="M0,-2 L0.6,-0.6 L2,-0.6 L0.9,0.3 L1.3,1.8 L0,0.9 L-1.3,1.8 L-0.9,0.3 L-2,-0.6 L-0.6,-0.6Z" fill="#555"/>
<text x="47.6" y="392.4" font-family="Liberation Sans" font-size="7" fill="#555" text-anchor="middle">6</text>
<path transform="translate(47.5,396.7)" d="M0,-2 L0.6,-0.6 L2,-0.6 L0.9,0.3 L1.3,1.8 L0,0.9 L-1.3,1.8 L-0.9,0.3 L-2,-0.6 L-0.6,-0.6Z" fill="#555"/>
</svg>
<div class="t" style="left:139.05px;top:406.43px;font-size:8.55px;color:#505050;transform:scaleX(0.822);">Click to add notes</div>
<div class="a" style="left:40px;top:419px;width:589.00px;height:10.00px;background:#d24726"></div>
<div class="t" style="left:43.40px;top:421.08px;font-size:6.38px;color:#fff;transform:scaleX(0.777);">SLIDE 1 OF 9</div>
<div class="t" style="left:386.31px;top:421.13px;font-size:6.09px;color:#fff;transform:scaleX(0.805);">NOTES</div>
<div class="t" style="left:420.15px;top:421.13px;font-size:6.09px;color:#fff;transform:scaleX(0.823);">COMMENTS</div>
<div class="t" style="left:597.38px;top:420.88px;font-size:6.38px;color:#fff;transform:scaleX(0.852);">87%</div>
<svg style="left:0;top:0" width="800" height="451" viewBox="0 0 800 451">
<path d="M84.4,421 H89.2 V426.2 H86.2 L84.4,427.6Z" fill="none" stroke="#f6d9cf" stroke-width="0.8"/><path d="M87.5,425 L90.8,421.2" stroke="#f6d9cf" stroke-width="0.9"/>
<path d="M379.2,427 H383.8 L383,423.5 H380Z" fill="none" stroke="#f6d9cf" stroke-width="0.7"/><circle cx="381.5" cy="421.8" r="1" fill="none" stroke="#f6d9cf" stroke-width="0.6"/>
<path d="M412.8,420.8 H418.5 V425 H415.5 L413.8,426.8 V425 H412.8Z" fill="#fff"/>
<rect x="458.6" y="419" width="17.9" height="10" fill="#b63c1f"/>
<rect x="464.2" y="420.7" width="6.4" height="6" fill="none" stroke="#fff" stroke-width="0.8"/><rect x="465.2" y="421.6" width="1.3" height="4.2" fill="#fff"/>
<g fill="#fff"><rect x="482.2" y="420.8" width="2.9" height="2.4"/><rect x="486.1" y="420.8" width="2.9" height="2.4"/><rect x="482.2" y="424.3" width="2.9" height="2.4"/><rect x="486.1" y="424.3" width="2.9" height="2.4"/></g>
<path d="M500,421 Q502.5,420.2 503.3,421.6 Q504.1,420.2 506.6,421 V426.8 Q504.1,426 503.3,427.2 Q502.5,426 500,426.8Z" fill="none" stroke="#f6d9cf" stroke-width="0.7"/>
<rect x="517.9" y="420.6" width="5.7" height="1" fill="#f6d9cf"/><rect x="518.6" y="421.6" width="4.3" height="3" fill="none" stroke="#f6d9cf" stroke-width="0.6"/><path d="M520.75,424.6 V426.6 M519.5,426.6 h2.5" stroke="#f6d9cf" stroke-width="0.6"/>
<rect x="532.8" y="423.6" width="2.4" height="0.9" fill="#fff"/>
<rect x="537.4" y="423.7" width="47.2" height="0.7" fill="#eeb4a2"/>
<rect x="557.6" y="420.8" width="1.3" height="6.3" fill="#fff"/><rect x="560.3" y="422.6" width="0.6" height="2.8" fill="#fff"/>
<path d="M586.9,424 h3.4 M588.6,422.3 v3.4" stroke="#fff" stroke-width="0.9"/>
<path d="M614.2,420.6 h2 M614.2,420.6 v2 M620.8,420.6 h-2 M620.8,420.6 v2 M614.2,427.3 h2 M614.2,427.3 v-2 M620.8,427.3 h-2 M620.8,427.3 v-2 M614.8,421.2 L616.8,423.2 M620.2,421.2 L618.2,423.2 M614.8,426.7 L616.8,424.7 M620.2,426.7 L618.2,424.7" stroke="#f6d9cf" stroke-width="0.6" fill="none"/>
</svg>
<svg style="left:0;top:0" width="800" height="451" viewBox="0 0 800 451">
<rect x="187" y="173.3" width="394.5" height="221.7" fill="#fff"/><rect x="581" y="173.3" width="0.8" height="221.7" fill="#d4d4d4"/><rect x="187" y="172.8" width="394.5" height="0.7" fill="#dedede"/>
<polygon points="187,173.6 342.7,173.6 272.7,395 187,395" fill="#1ba99b"/>
<polygon points="538.9,395 581,262 581,395" fill="#1ba99b"/>
<clipPath id="sc"><rect x="187" y="173.6" width="394" height="221.4"/></clipPath>
<g clip-path="url(#sc)" fill="#1ba99b">
<circle cx="571.6" cy="183.3" r="17.7"/>
<circle cx="543.2" cy="189.8" r="6"/>
<circle cx="546.6" cy="207.6" r="2.7"/>
<circle cx="565.9" cy="213.1" r="8.2"/>
</g>
<circle cx="301" cy="284.7" r="51.4" fill="#fff" stroke="#1ba99b" stroke-width="1.4"/>
</svg>
<div class="t" style="left:395.66px;top:236.20px;font-size:23.77px;color:#3d3d3d;font-weight:bold;transform:scaleX(0.880);letter-spacing:2.911px;">Graduation</div>
<div class="t" style="left:367.76px;top:262.10px;font-size:23.77px;color:#3d3d3d;font-weight:bold;transform:scaleX(0.880);letter-spacing:2.760px;">Opening Report</div>
<div class="t" style="left:356.60px;top:296.49px;font-size:11.30px;color:#404040;font-weight:bold;transform:scaleX(0.918);">—AI and Machine Learning for Fashion</div>
<div class="t" style="left:423.85px;top:308.49px;font-size:11.30px;color:#404040;font-weight:bold;transform:scaleX(0.954);">Industry —</div>
<div class="t" style="left:367.62px;top:325.17px;font-size:9.57px;color:#404040;font-weight:bold;transform:scaleX(0.959);">Author: Emeka(梅</div>
<div class="t" style="left:400.78px;top:334.17px;font-size:9.57px;color:#404040;font-weight:bold;transform:scaleX(0.788);">卡)</div>
<div class="t" style="left:465.75px;top:325.17px;font-size:9.57px;color:#404040;font-weight:bold;transform:scaleX(0.961);">Instuctor: 朱联祥</div>
<svg style="left:0;top:0" width="800" height="451" viewBox="0 0 800 451">
<g transform="translate(276.7,272.5) rotate(-20.6)">
<rect x="0" y="0" width="36.4" height="26" rx="1.2" fill="#1ba99b"/>
<path d="M3.5,22.5 L3.5,10 L17.4,7.8 L29,5.6 L33,13.5 L33,22.5 Z" fill="#fff"/>
</g>
<rect x="281.7" y="273.6" width="45.8" height="34.3" rx="4" fill="#fff"/>
<g transform="translate(285.7,277.9)">
<rect x="0" y="0" width="37.8" height="26" rx="1.3" fill="#1ba99b"/>
<path d="M4.9,20.9 L5.6,17.3 L9.6,7.1 L16,14.7 L22.9,9.4 L30.2,6 L33.8,13.3 L33.8,20.9 Z" fill="#fff"/>
</g>
</svg>
<svg style="left:0;top:0" width="800" height="451" viewBox="0 0 800 451">
<defs><clipPath id="ac"><circle cx="0" cy="0" r="14.3"/></clipPath></defs>
<rect x="635.75" y="57.45" width="117.5" height="65.3" rx="2.5" fill="#2c3033" stroke="#1fc75c" stroke-width="1.5"/>
<rect x="635.6" y="128.3" width="117.8" height="65.8" rx="2.5" fill="#2c3033" stroke="#5a5c60" stroke-width="1.2"/>
<rect x="635.6" y="199.29999999999998" width="117.8" height="65.8" rx="2.5" fill="#2c3033" stroke="#5a5c60" stroke-width="1.2"/>
<rect x="635.6" y="270.3" width="117.8" height="65.8" rx="2.5" fill="#2c3033" stroke="#5a5c60" stroke-width="1.2"/>
<rect x="635.6" y="341.3" width="117.8" height="65.8" rx="2.5" fill="#2c3033" stroke="#5a5c60" stroke-width="1.2"/>
<rect x="635.6" y="412.3" width="117.8" height="65.8" rx="2.5" fill="#2c3033" stroke="#5a5c60" stroke-width="1.2"/>
<circle cx="694.4" cy="85" r="14.3" fill="#0f6cf2"/>
<g transform="translate(694.6,156)" clip-path="url(#ac)"><rect x="-15" y="-15" width="30" height="30" fill="#1c1c1e"/><path d="M5,-15 L15,-15 L15,-8 L9,-9Z" fill="#8a5a3a"/><path d="M-15,-2 L-15,6 L9,6 L9,-4 L2,-4Z" fill="#d6c49c"/><path d="M-15,-5 C-8,-6 -2,-5 3,-4 L5,2 L-2,1 L-15,0Z" fill="#c0a084"/><rect x="-4" y="0" width="19" height="2.6" fill="#34302a"/><rect x="8" y="-4" width="2.8" height="17" fill="#c66a30"/><rect x="10.8" y="-6" width="4.5" height="9" fill="#3d6fcc"/><path d="M-15,5 L9,5 L9,15 L-15,15Z" fill="#d4d4d6"/><rect x="-6" y="6" width="9" height="2.2" fill="#4f9a4a"/></g>
<g transform="translate(694.6,226.2)" clip-path="url(#ac)"><rect x="-15" y="-15" width="30" height="30" fill="#dcdad8"/><rect x="-15" y="1" width="30" height="15" fill="#3a3028"/><path d="M-15,0 L-8,-1 L-4,1 L4,1 L9,-2 L15,0 L15,5 L-15,5Z" fill="#4a3a2a"/><rect x="-15" y="2.5" width="30" height="2" fill="#b86a34"/><path d="M-1,-10.5 L1,-10.5 L2.8,1.5 L-2.8,1.5Z" fill="#e9a040"/><path d="M-3,7 L3,7 L6,15 L-6,15Z" fill="#7a726a"/><rect x="-3" y="4" width="6" height="2" fill="#4e7a3a"/></g>
<g transform="translate(694.6,297.2)" clip-path="url(#ac)"><rect x="-15" y="-15" width="30" height="30" fill="#e9e2d6"/><path d="M4,-15 L15,-15 L15,15 L8,15 Z" fill="#7e5c4a"/><rect x="11" y="0" width="4" height="9" fill="#5e7050"/><path d="M-3,-12 C2,-15 8,-12 8,-6 L7,4 L-4,3 C-6,-4 -5,-9 -3,-12Z" fill="#4a3026"/><path d="M-1,-8 C1,-9 3,-8 3,-5 L2,-1 L-1,-1Z" fill="#efe4d8"/><path d="M-6,0 L6,-2 L10,6 L9,15 L-8,15 L-9,7Z" fill="#b89a58"/><path d="M-15,-6 L-7,-6 L-7,2 L-15,3Z" fill="#c9a878"/><path d="M-15,8 L4,10 L4,15 L-15,15Z" fill="#9c7a58"/><circle cx="-1" cy="-1" r="1" fill="#b03a30"/></g>
<g transform="translate(694.6,368.4)" clip-path="url(#ac)"><rect x="-15" y="-15" width="30" height="30" fill="#9a6030"/><rect x="-10" y="-15" width="3" height="16" fill="#c08848"/><rect x="-3" y="-15" width="5" height="15" fill="#d8c0a0"/><rect x="5" y="-15" width="3" height="14" fill="#6a3e1e"/><path d="M-6,-1 L8,-5 L15,-3 L15,6 L8,13 L-2,9 L-6,4Z" fill="#1e3f9c"/><path d="M-2,1 L4,-1 L5,3 L0,4Z" fill="#4a7ad8"/><path d="M-15,3 L-5,0 L-3,6 L-15,9Z" fill="#d8cfbe"/><path d="M-9,7 L2,8 L6,15 L-10,15Z" fill="#1e3f9c"/><path d="M-6,8 L1,9 L0,12 L-7,11Z" fill="#d0c8b8"/></g>
<g transform="translate(694.8,438.4)" clip-path="url(#ac)"><rect x="-15" y="-15" width="30" height="30" fill="#0a0a0a"/><path d="M0,-13.5 C6,-10 10,-4 10,3 L12,15 L-12,15 L-10,3 C-10,-4 -6,-10 0,-13.5Z" fill="#8c8474"/><path d="M0,-9 C5,-7 7,-3 7,2 C7,8 4,11 0,11 C-4,11 -7,8 -7,2 C-7,-3 -5,-7 0,-9Z" fill="#2a2624"/><ellipse cx="0" cy="4" rx="5" ry="5.5" fill="#4e4640"/><circle cx="2.5" cy="2" r="0.8" fill="#4a86b8"/><circle cx="-2.5" cy="2" r="0.8" fill="#8a6a40"/><path d="M-12,10 L-6,9 L-4,15 L-12,15Z M12,10 L6,9 L4,15 L12,15Z" fill="#a89c84"/></g>
<rect x="636.7" y="110.2" width="115.6" height="11.3" fill="#19191b"/>
<rect x="636" y="179.50" width="45.70" height="13" fill="#19191b"/>
<rect x="636" y="250.50" width="59.90" height="13" fill="#19191b"/>
<rect x="636" y="321.50" width="37.00" height="13" fill="#19191b"/>
<rect x="636" y="392.50" width="45.30" height="13" fill="#19191b"/>
<g transform="translate(657.4,111.3) scale(1.15)"><rect x="-2" y="0" width="4" height="6.5" rx="2" fill="#fff"/><path d="M-2,3.5 L2,3.5 L2,4.5 A2,2 0 0 1 -2,4.5Z" fill="#1fc75c"/><path d="M-3.6,3.6 A3.6,3.6 0 0 0 3.6,3.6" fill="none" stroke="#fff" stroke-width="1"/><rect x="-0.5" y="7.2" width="1" height="2" fill="#fff"/></g>
<g transform="translate(643.5,181.5) scale(1.15)"><rect x="-2" y="0" width="4" height="6.5" rx="2" fill="#fff"/><path d="M-3.6,3.6 A3.6,3.6 0 0 0 3.6,3.6" fill="none" stroke="#fff" stroke-width="1"/><rect x="-0.5" y="7.2" width="1" height="2" fill="#fff"/><line x1="-4.2" y1="9" x2="4.2" y2="0.5" stroke="#e8362f" stroke-width="1"/></g>
<g transform="translate(657.6,252.8) scale(1.15)"><rect x="-2" y="0" width="4" height="6.5" rx="2" fill="#fff"/><path d="M-3.6,3.6 A3.6,3.6 0 0 0 3.6,3.6" fill="none" stroke="#fff" stroke-width="1"/><rect x="-0.5" y="7.2" width="1" height="2" fill="#fff"/></g>
<g transform="translate(643.5,323.5) scale(1.15)"><rect x="-2" y="0" width="4" height="6.5" rx="2" fill="#fff"/><path d="M-3.6,3.6 A3.6,3.6 0 0 0 3.6,3.6" fill="none" stroke="#fff" stroke-width="1"/><rect x="-0.5" y="7.2" width="1" height="2" fill="#fff"/><line x1="-4.2" y1="9" x2="4.2" y2="0.5" stroke="#e8362f" stroke-width="1"/></g>
<g transform="translate(643.5,394.5) scale(1.15)"><rect x="-2" y="0" width="4" height="6.5" rx="2" fill="#fff"/><path d="M-3.6,3.6 A3.6,3.6 0 0 0 3.6,3.6" fill="none" stroke="#fff" stroke-width="1"/><rect x="-0.5" y="7.2" width="1" height="2" fill="#fff"/><line x1="-4.2" y1="9" x2="4.2" y2="0.5" stroke="#e8362f" stroke-width="1"/></g>
<g transform="translate(638.6,111.2)"><rect x="0" y="0" width="9.8" height="6.8" rx="0.6" fill="#fff"/><path d="M3,5 L6.5,2.2 M4.8,2 L6.7,2 L6.7,3.8" stroke="#222" stroke-width="0.9" fill="none"/><rect x="2.5" y="7.8" width="4.8" height="1.4" fill="#fff"/></g>
<rect x="636" y="250.5" width="13.1" height="13" fill="#f7821b"/>
<circle cx="642.4" cy="254.6" r="2.3" fill="#fff"/>
<path d="M637.6,262.8 C637.8,258.4 639.8,257.3 642.4,257.3 C645,257.3 647,258.4 647.2,262.8Z" fill="#fff"/>
</svg>
<div class="t" style="left:665.24px;top:111.45px;font-size:9.71px;color:#fff;transform:scaleX(0.916);-webkit-text-stroke:0.25px #fff;">Screen shared by E...</div>
<div class="t" style="left:690.53px;top:79.88px;font-size:10.14px;color:#fff;transform:scaleX(1.075);">E</div>
<div class="t" style="left:652.11px;top:182.64px;font-size:9.60px;color:#fff;font-weight:bold;transform:scaleX(0.916);">张留美</div>
<div class="t" style="left:666.77px;top:253.34px;font-size:9.60px;color:#fff;font-weight:bold;transform:scaleX(0.893);">朱联祥</div>
<div class="t" style="left:651.32px;top:323.44px;font-size:9.60px;color:#fff;font-weight:bold;transform:scaleX(0.978);">史益</div>
<div class="t" style="left:651.89px;top:394.84px;font-size:9.60px;color:#fff;font-weight:bold;transform:scaleX(0.916);">王潇潇</div>
</body></html>
